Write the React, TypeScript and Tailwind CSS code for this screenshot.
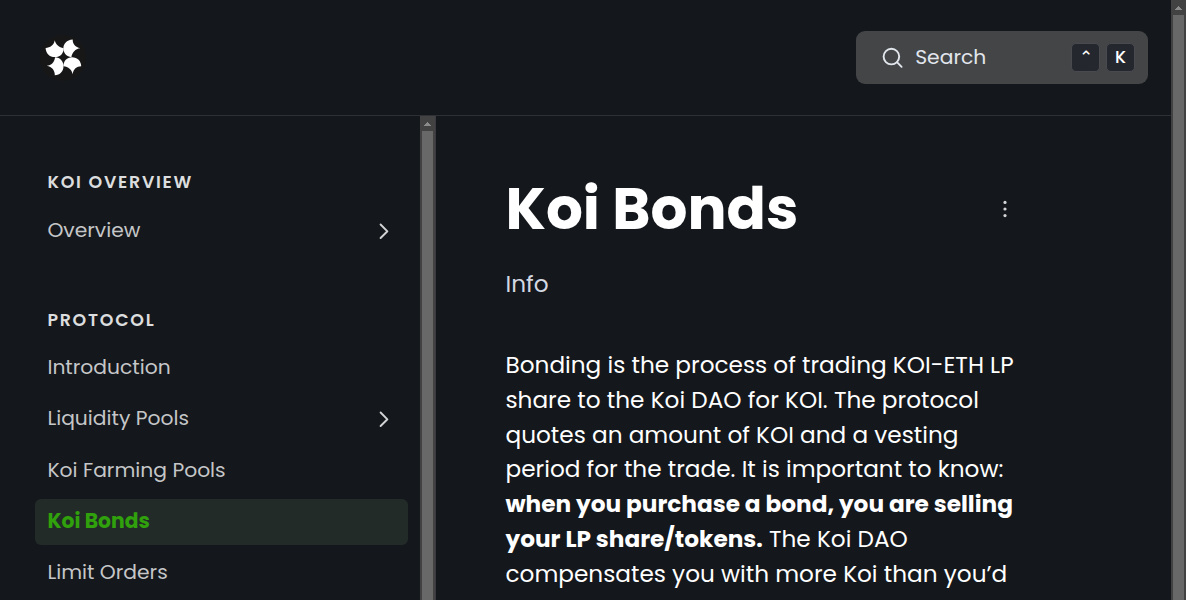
import type { ReactNode } from "react";

function Logo() {
  return (
    <svg width="46" height="46" viewBox="0 0 46 46" aria-hidden="true">
      <circle cx="23" cy="23" r="23" fill="#171717" />
      <g fill="#fff">
        <path d="M5.6 12.9C10.2 12.8 14 10.2 14.7 5.3C15.8 9.6 19 12.6 23.7 13.2C23.8 18.4 20.2 22.1 15 22.1C9.4 22.1 5.8 18 5.6 12.9Z" />
        <path d="M32.7 4.6C26.6 5 23.3 9 23.4 13.6C23.5 18.4 26.8 21.9 31.4 22.2C32 17.4 35.4 13.8 40.2 13.2C35.6 12.4 32.6 9.4 32.7 4.6Z" />
        <path d="M6.8 30.8C11.4 30.2 14.6 27 15 22.2C20.2 22.4 23.5 26.2 23.5 31C23.5 36.4 20 40.2 14.8 40.2C15 35.6 12 31.8 6.8 30.8Z" />
        <path d="M23.4 31.2C23.4 26 27 22.2 32 22.2C37.4 22.2 41.1 26 41.2 31.2C36.6 31.2 33.4 34 32.6 39.2C31.8 34.6 28.4 31.6 23.4 31.2Z" />
      </g>
    </svg>
  );
}

function Scrollbar() {
  return (
    <div className="flex w-[15px] shrink-0 flex-col items-center bg-[#424242]">
      <div className="flex h-[15px] shrink-0 items-center justify-center">
        <svg width="7" height="4" viewBox="0 0 7 4" shapeRendering="crispEdges" fill="#8b8b8b" aria-hidden="true">
          <path d="M3 0h1v1h1v1h1v1h1v1H0V3h1V2h1V1h1z" />
        </svg>
      </div>
      <div className="w-[11px] grow bg-[#686868]" />
    </div>
  );
}

function Chevron() {
  return (
    <svg className="mt-px" width="16" height="18" viewBox="0 0 16 18" fill="none" stroke="#d3d4d5" strokeWidth="1.9" strokeLinecap="round" strokeLinejoin="round" aria-hidden="true">
      <path d="M4.6 2.5L11.4 9.3L4.6 16" />
    </svg>
  );
}

function Heading({ children }: { children: ReactNode }) {
  return (
    <h2 className="px-[12.4px] text-[17.4px] leading-[26px] font-semibold tracking-[1.74px] text-[#dcddde] uppercase">{children}</h2>
  );
}

function Item({ label, active, nested }: { label: string; active?: boolean; nested?: boolean }) {
  return (
    <a
      className={`flex h-[46px] items-center justify-between rounded-[6px] pr-4 pb-[1.1px] pl-[12.4px] text-[20.3px] leading-[29px] ${
        active ? "bg-[#222b28] font-bold text-[#30a10c]" : "text-[#c5c6c8]"
      }`}
    >
      {label}
      {nested && <Chevron />}
    </a>
  );
}

function Key({ children }: { children: ReactNode }) {
  return (
    <kbd className="flex h-[29px] w-[29px] items-center justify-center rounded-[5px] border border-[#484a50] bg-[#25272f] font-['Poppins',sans-serif] text-[17.4px] leading-none font-medium text-white">
      {children}
    </kbd>
  );
}

export default function App() {
  return (
    <div className="flex h-[600px] w-full overflow-hidden bg-[#14171b] font-['Poppins',sans-serif] text-white">
      <div className="flex min-w-0 grow flex-col">
        <header className="flex h-[116px] shrink-0 items-center justify-between border-b border-[#2e3035] pr-[23px] pl-[40px]">
          <Logo />
          <div className="flex h-[53px] w-[292px] items-center rounded-[9px] bg-[#444547] pr-[13px] pl-[25px]">
            <svg width="24" height="24" viewBox="0 0 24 24" fill="none" stroke="#e2e6ed" strokeWidth="1.9" strokeLinecap="round" aria-hidden="true">
              <circle cx="10.4" cy="10.6" r="7.8" />
              <path d="M16.2 16.4L20.6 20.8" />
            </svg>
            <span className="ml-[10.2px] grow pb-px text-[20.3px] leading-[29px] text-[#e2e6ed]">Search</span>
            <div className="flex gap-[6px]">
              <Key>⌃</Key>
              <Key>K</Key>
            </div>
          </div>
        </header>

        <div className="flex min-h-0 grow">
          <aside className="flex w-[436px] shrink-0 border-r border-[#3b3a42]">
            <nav className="min-w-0 grow overflow-hidden pt-[53px] pr-3 pl-[35px]">
              <Heading>Koi Overview</Heading>
              <div className="mt-[13px]">
                <Item label="Overview" nested />
              </div>
              <div className="mt-[53px]">
                <Heading>Protocol</Heading>
              </div>
              <div className="mt-[12px] flex flex-col gap-[5.3px]">
                <Item label="Introduction" />
                <Item label="Liquidity Pools" nested />
                <Item label="Koi Farming Pools" />
                <Item label="Koi Bonds" active />
                <Item label="Limit Orders" />
              </div>
            </nav>
            <Scrollbar />
          </aside>

          <main className="min-w-0 grow overflow-hidden pt-[57px] pl-[69.5px]">
            <div className="flex w-[509px] items-center justify-between">
              <h1 className="text-[58px] leading-[72px] font-bold">Koi Bonds</h1>
              <svg className="mt-px mr-[5.5px]" width="8" height="20" viewBox="0 0 8 20" fill="#d3d4d5" aria-hidden="true">
                <circle cx="4" cy="2.4" r="1.6" />
                <circle cx="4" cy="9" r="1.6" />
                <circle cx="4" cy="15.6" r="1.6" />
              </svg>
            </div>
            <p className="mt-[22px] text-[23.2px] leading-[34.8px] text-[#d3d8e2]">Info</p>
            <p className="mt-[46.3px] w-[520px] text-[23.2px] leading-[34.8px]">
              Bonding is the process of trading KOI-ETH LP share to the Koi DAO for KOI. The protocol quotes an amount
              of KOI and a vesting period for the trade. It is important to know:{" "}
              <strong className="font-bold">when you purchase a bond, you are selling your LP share/tokens.</strong> The
              Koi DAO
              <br />
              compensates you with more Koi than you’d
            </p>
          </main>
        </div>
      </div>
      <Scrollbar />
    </div>
  );
}
